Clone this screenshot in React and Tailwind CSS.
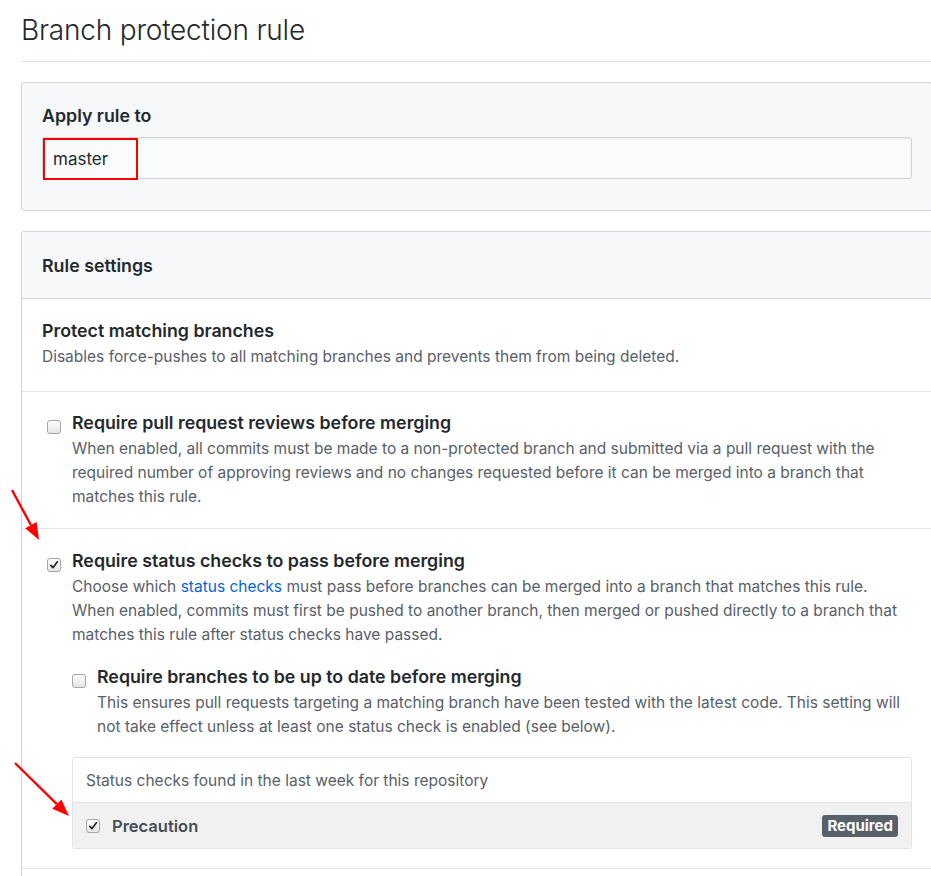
import React from "react";

const font = { fontFamily: "Inter, 'Noto Sans', 'Liberation Sans', sans-serif" };

function Box({ checked }) {
  return (
    <span className="relative inline-block w-[14px] h-[14px] rounded-[3px] border border-[#a5a5a5] bg-gradient-to-b from-[#fdfdfd] to-[#e6e6e6] shrink-0">
      {checked && (
        <svg className="absolute left-[1px] top-[1px]" width="10" height="10" viewBox="0 0 10 10">
          <path d="M1.8 5.3 L4 7.6 L8.4 1.8" fill="none" stroke="#222" strokeWidth="1.7" strokeLinecap="round" strokeLinejoin="round" />
        </svg>
      )}
    </span>
  );
}

function Arrow({ x1, y1, x2, y2, className }) {
  const ang = Math.atan2(y2 - y1, x2 - x1);
  const len = 17, w = 6.5;
  const bx = x2 - len * Math.cos(ang), by = y2 - len * Math.sin(ang);
  const px = -Math.sin(ang) * w, py = Math.cos(ang) * w;
  return (
    <svg className={className} width="931" height="876" viewBox="0 0 931 876">
      <line x1={x1} y1={y1} x2={bx} y2={by} stroke="#ff0000" strokeWidth="2.4" />
      <polygon points={`${x2},${y2} ${bx + px},${by + py} ${bx - px},${by - py}`} fill="#ff0000" />
    </svg>
  );
}

const T = "text-[17.8px] leading-[28px] font-semibold";
const D = "text-[15.5px] leading-[24px] text-[#586069]";

export default function App() {
  return (
    <div className="relative w-[931px] h-[876px] overflow-hidden bg-white text-[#24292e]" style={font}>
      <div className="pl-[21px] w-[960px]">
        <h1 className="pt-[11px] pb-[12px] text-[28px] leading-[38px] font-light tracking-[-0.2px] border-b border-[#e1e4e8] w-[912px]">
          Branch protection rule
        </h1>

        <div className="mt-[20px] w-[912px] border border-[#d1d5da] rounded-[3px] bg-[#f6f8fa] px-[20px] pt-[20px] pb-[31px]">
          <div className="text-[17.8px] leading-[26px] font-semibold">Apply rule to</div>
          <div className="relative mt-[8px] h-[42px] border border-[#d1d5da] rounded-[3px] bg-[#fafbfc] flex items-center pl-[10px] pt-[3px] text-[17px] shadow-[inset_0_1px_2px_rgba(27,31,35,0.075)]">
            master
            <div className="absolute left-0 top-0 w-[95px] h-[42px] border-2 border-[#ff0000]" />
          </div>
        </div>

        <div className="mt-[20px] w-[912px] border border-[#d1d5da] rounded-[3px]">
          <div className="bg-[#f6f8fa] px-[20px] pt-[21px] pb-[19px] text-[17.8px] leading-[26px] font-semibold border-b border-[#d1d5da]">
            Rule settings
          </div>

          <div className="px-[20px] pt-[18px] pb-[22px] border-b border-[#e1e4e8]">
            <div className={T}>Protect matching branches</div>
            <div className={D}>
              Disables force-pushes to all matching branches and prevents them from being deleted.
            </div>
          </div>

          <div className="px-[20px] pt-[17px] pb-[19px] border-b border-[#e1e4e8]">
            <div className="flex">
              <div className="w-[30px] pl-[5px] pt-[7px]"><Box /></div>
              <div className="flex-1 pr-[1px]">
                <div className={T}>Require pull request reviews before merging</div>
                <div className={D}>
                  When enabled, all commits must be made to a non-protected branch and submitted via a pull request with the required number of approving reviews and no changes requested before it can be merged into a branch that matches this rule.
                </div>
              </div>
            </div>
          </div>

          <div className="px-[20px] pt-[18px] pb-[19px] border-b border-[#e1e4e8]">
            <div className="flex">
              <div className="w-[30px] pl-[5px] pt-[7px]"><Box checked /></div>
              <div className="flex-1 pr-[1px]">
                <div className={T}>Require status checks to pass before merging</div>
                <div className={D}>
                  Choose which <span className="text-[#0366d6]">status checks</span> must pass before branches can be merged into a branch that matches this rule. When enabled, commits must first be pushed to another branch, then merged or pushed directly to a branch that matches this rule after status checks have passed.
                </div>

                <div className="flex mt-[16px]">
                  <div className="w-[25px] pt-[7px]"><Box /></div>
                  <div className="flex-1">
                    <div className={T}>Require branches to be up to date before merging</div>
                    <div className={D}>
                      This ensures pull requests targeting a matching branch have been tested with the latest code. This setting will not take effect unless at least one status check is enabled (see below).
                    </div>
                  </div>
                </div>

                <div className="mt-[18px] border border-[#e1e4e8] rounded-[3px] mr-[-1px]">
                  <div className="h-[45px] px-[13px] pt-[2px] flex items-center text-[15.5px] text-[#586069] border-b border-[#e1e4e8]">
                    Status checks found in the last week for this repository
                  </div>
                  <div className="h-[45px] pl-[13px] pr-[13px] pt-[1px] flex items-center bg-[#f1f1f1]">
                    <Box checked />
                    <span className="ml-[12px] text-[16.5px] font-semibold text-[#444d56]">Precaution</span>
                    <span className="ml-auto h-[22px] px-[5px] rounded-[3px] bg-[#586069] text-white text-[15px] font-bold flex items-center">Required</span>
                  </div>
                </div>
              </div>
            </div>
          </div>
          <div className="h-[20px]" />
        </div>
      </div>

      <Arrow className="absolute left-0 top-0 pointer-events-none" x1={12} y1={490} x2={39} y2={540} />
      <Arrow className="absolute left-0 top-0 pointer-events-none" x1={15} y1={763} x2={69} y2={816} />
    </div>
  );
}
